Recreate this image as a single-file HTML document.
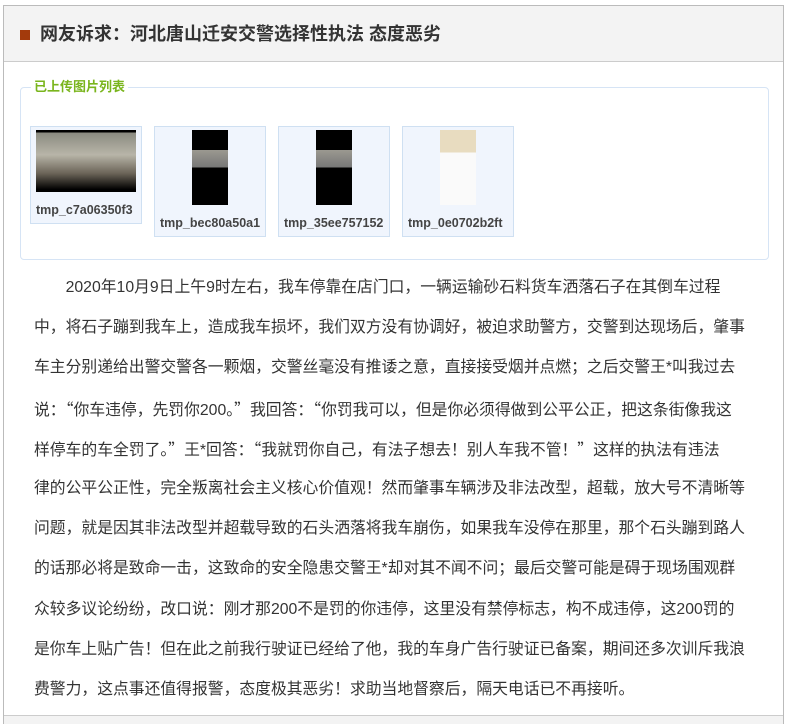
<!DOCTYPE html>
<html><head><meta charset="utf-8"><style>
html,body{margin:0;background:#fff;font-family:"Liberation Sans","Noto Sans CJK SC",sans-serif;width:789px;height:725px;overflow:hidden;}
.wrap{position:absolute;left:3px;top:5px;width:779px;height:718px;border:1px solid #bbb;border-bottom:none;overflow:hidden;}
.hd{position:absolute;left:0;top:0;width:779px;height:55px;background:#f3f3f3;border-bottom:1px solid #ccc;}
.sq{position:absolute;left:16px;top:24px;width:10px;height:10px;background:#a33a0c;}
.tt{position:absolute;left:36px;top:16px;font-size:18px;font-weight:bold;color:#333;line-height:24px;}
.fs{position:absolute;left:16px;top:81px;width:747px;height:171px;border:1px solid #d6e4f5;border-radius:4px;}
.lg{position:absolute;left:10px;top:-9px;background:#fff;padding:0 3px;font-size:13px;font-weight:bold;color:#7ab51d;line-height:16px;}
.th{position:absolute;top:120px;width:110px;height:96px;border:1px solid #cfe0f2;background:#f0f5fd;font-size:12.5px;font-weight:bold;color:#444;text-align:center;overflow:hidden;}
.th .im{margin:3px auto 0;}
.th .cap{position:absolute;left:5px;right:3px;white-space:nowrap;overflow:hidden;text-align:left;}
.tx{position:absolute;left:30px;top:262px;font-size:15.8px;color:#333;}
.tx div{height:40.2px;line-height:40.2px;white-space:nowrap;}
.q{font-family:"Noto Sans CJK SC",sans-serif;}
.ft{position:absolute;left:0;top:709px;width:779px;height:20px;background:#f3f3f3;border-top:1px solid #ccc;}
</style></head><body>
<div class="wrap">
<div class="hd"><div class="sq"></div><div class="tt">网友诉求：河北唐山迁安交警选择性执法 态度恶劣</div></div>
<div class="fs"><div class="lg">已上传图片列表</div></div>
<div class="th" style="left:26px;height:96px;"><div class="im" style="width:100px;height:62px;background:linear-gradient(#000 0 4%,#8a8a80 4%,#b8b5a8 40%,#6b6458 70%,#000 96%);"></div><div class="cap" style="top:76px">tmp_c7a06350f3</div></div>
<div class="th" style="left:150px;height:109px;"><div class="im" style="width:36px;height:75px;background:linear-gradient(#000 0 27%,#9a9890 27%,#777 50%,#000 50%);"></div><div class="cap" style="top:89px">tmp_bec80a50a1</div></div>
<div class="th" style="left:274px;height:109px;"><div class="im" style="width:36px;height:75px;background:linear-gradient(#000 0 27%,#9a9890 27%,#777 50%,#000 50%);"></div><div class="cap" style="top:89px">tmp_35ee757152</div></div>
<div class="th" style="left:398px;height:109px;"><div class="im" style="width:36px;height:75px;background:linear-gradient(#e8dcc0 0 30%,#fafafa 30%);"></div><div class="cap" style="top:89px">tmp_0e0702b2ft</div></div>
<div class="tx">
<div>&emsp;&emsp;2020年10月9日上午9时左右，我车停靠在店门口，一辆运输砂石料货车洒落石子在其倒车过程</div>
<div>中，将石子蹦到我车上，造成我车损坏，我们双方没有协调好，被迫求助警方，交警到达现场后，肇事</div>
<div>车主分别递给出警交警各一颗烟，交警丝毫没有推诿之意，直接接受烟并点燃；之后交警王*叫我过去</div>
<div>说：<span class="q">“</span>你车违停，先罚你200。<span class="q">”</span>我回答：<span class="q">“</span>你罚我可以，但是你必须得做到公平公正，把这条街像我这</div>
<div>样停车的车全罚了。<span class="q">”</span>王*回答：<span class="q">“</span>我就罚你自己，有法子想去！别人车我不管！<span class="q">”</span>这样的执法有违法</div>
<div>律的公平公正性，完全叛离社会主义核心价值观！然而肇事车辆涉及非法改型，超载，放大号不清晰等</div>
<div>问题，就是因其非法改型并超载导致的石头洒落将我车崩伤，如果我车没停在那里，那个石头蹦到路人</div>
<div>的话那必将是致命一击，这致命的安全隐患交警王*却对其不闻不问；最后交警可能是碍于现场围观群</div>
<div>众较多议论纷纷，改口说：刚才那200不是罚的你违停，这里没有禁停标志，构不成违停，这200罚的</div>
<div>是你车上贴广告！但在此之前我行驶证已经给了他，我的车身广告行驶证已备案，期间还多次训斥我浪</div>
<div>费警力，这点事还值得报警，态度极其恶劣！求助当地督察后，隔天电话已不再接听。</div>
</div>
<div class="ft"></div>
</div>
</body></html>
